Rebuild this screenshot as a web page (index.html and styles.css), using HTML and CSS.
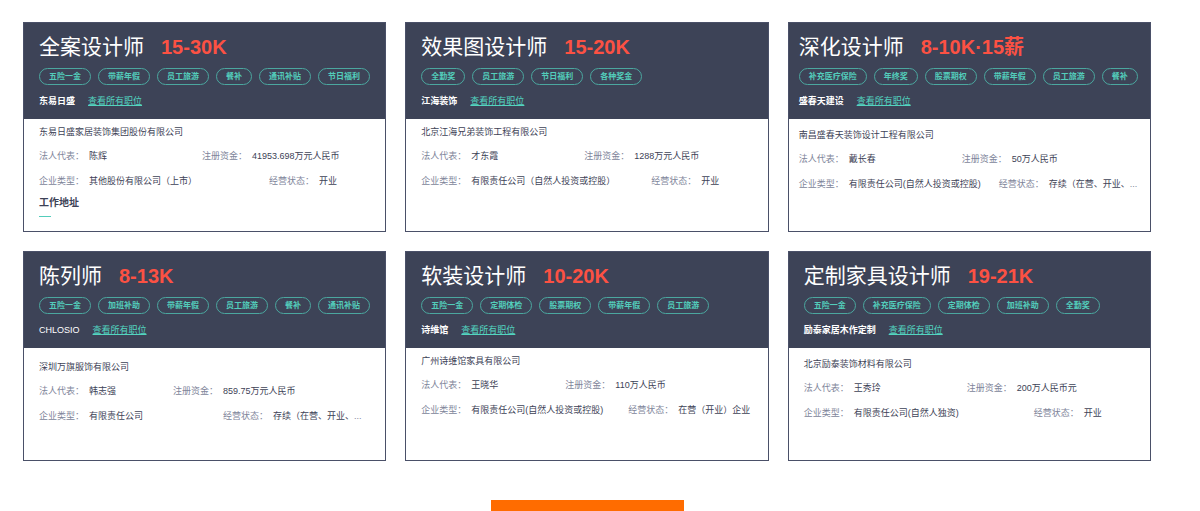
FILE: index.html
```
<!DOCTYPE html>
<html lang="zh-CN">
<head>
  <meta charset="UTF-8">
  <meta name="viewport" content="width=device-width, initial-scale=1.0">
  <title>设计师职位</title>
  <link rel="stylesheet" href="styles.css">
</head>
<body>
  <div class="container">
    <div class="cards">
      <div class="card">
        <div class="head">
          <div class="title">
            <h2>全案设计师</h2>
            <span class="salary">15-30K</span>
          </div>
          <ul class="tags">
            <li>五险一金</li>
            <li>带薪年假</li>
            <li>员工旅游</li>
            <li>餐补</li>
            <li>通讯补贴</li>
            <li>节日福利</li>
          </ul>
          <div class="company">
            <b>东易日盛</b>
            <a href="#">查看所有职位</a>
          </div>
        </div>
        <div class="info">
          <p class="name">东易日盛家居装饰集团股份有限公司</p>
          <div class="line">
            <p><span>法人代表：</span>陈辉</p>
            <p><span>注册资金：</span>41953.698万元人民币</p>
          </div>
          <div class="line type">
            <p><span>企业类型：</span>其他股份有限公司（上市）</p>
            <p><span>经营状态：</span>开业</p>
          </div>
          <h3 class="address">工作地址</h3>
        </div>
      </div>

      <div class="card">
        <div class="head">
          <div class="title">
            <h2>效果图设计师</h2>
            <span class="salary">15-20K</span>
          </div>
          <ul class="tags">
            <li>全勤奖</li>
            <li>员工旅游</li>
            <li>节日福利</li>
            <li>各种奖金</li>
          </ul>
          <div class="company">
            <b>江海装饰</b>
            <a href="#">查看所有职位</a>
          </div>
        </div>
        <div class="info">
          <p class="name">北京江海兄弟装饰工程有限公司</p>
          <div class="line">
            <p><span>法人代表：</span>才东霞</p>
            <p><span>注册资金：</span>1288万元人民币</p>
          </div>
          <div class="line type">
            <p><span>企业类型：</span>有限责任公司（自然人投资或控股）</p>
            <p><span>经营状态：</span>开业</p>
          </div>
        </div>
      </div>

      <div class="card narrow">
        <div class="head">
          <div class="title">
            <h2>深化设计师</h2>
            <span class="salary">8-10K·15薪</span>
          </div>
          <ul class="tags">
            <li>补充医疗保险</li>
            <li>年终奖</li>
            <li>股票期权</li>
            <li>带薪年假</li>
            <li>员工旅游</li>
            <li>餐补</li>
          </ul>
          <div class="company">
            <b>盛春天建设</b>
            <a href="#">查看所有职位</a>
          </div>
        </div>
        <div class="info low">
          <p class="name">南昌盛春天装饰设计工程有限公司</p>
          <div class="line">
            <p><span>法人代表：</span>戴长春</p>
            <p><span>注册资金：</span>50万人民币</p>
          </div>
          <div class="line type w200">
            <p><span>企业类型：</span>有限责任公司(自然人投资或控股)</p>
            <p><span>经营状态：</span>存续（在营、开业、<i>...</i></p>
          </div>
        </div>
      </div>

      <div class="card">
        <div class="head">
          <div class="title">
            <h2>陈列师</h2>
            <span class="salary">8-13K</span>
          </div>
          <ul class="tags">
            <li>五险一金</li>
            <li>加班补助</li>
            <li>带薪年假</li>
            <li>员工旅游</li>
            <li>餐补</li>
            <li>通讯补贴</li>
          </ul>
          <div class="company">
            <span>CHLOSIO</span>
            <a href="#">查看所有职位</a>
          </div>
        </div>
        <div class="info lower">
          <p class="name">深圳万旗服饰有限公司</p>
          <div class="line w134">
            <p><span>法人代表：</span>韩志强</p>
            <p><span>注册资金：</span>859.75万元人民币</p>
          </div>
          <div class="line type w184">
            <p><span>企业类型：</span>有限责任公司</p>
            <p><span>经营状态：</span>存续（在营、开业、<i>...</i></p>
          </div>
        </div>
      </div>

      <div class="card">
        <div class="head">
          <div class="title">
            <h2>软装设计师</h2>
            <span class="salary">10-20K</span>
          </div>
          <ul class="tags">
            <li>五险一金</li>
            <li>定期体检</li>
            <li>股票期权</li>
            <li>带薪年假</li>
            <li>员工旅游</li>
          </ul>
          <div class="company">
            <b>诗维馆</b>
            <a href="#">查看所有职位</a>
          </div>
        </div>
        <div class="info">
          <p class="name">广州诗维馆家具有限公司</p>
          <div class="line w144">
            <p><span>法人代表：</span>王晓华</p>
            <p><span>注册资金：</span>110万人民币</p>
          </div>
          <div class="line type w207">
            <p><span>企业类型：</span>有限责任公司(自然人投资或控股)</p>
            <p><span>经营状态：</span>在营（开业）企业</p>
          </div>
        </div>
      </div>

      <div class="card">
        <div class="head">
          <div class="title">
            <h2>定制家具设计师</h2>
            <span class="salary">19-21K</span>
          </div>
          <ul class="tags">
            <li>五险一金</li>
            <li>补充医疗保险</li>
            <li>定期体检</li>
            <li>加班补助</li>
            <li>全勤奖</li>
          </ul>
          <div class="company">
            <b>励泰家居木作定制</b>
            <a href="#">查看所有职位</a>
          </div>
        </div>
        <div class="info low">
          <p class="name">北京励泰装饰材料有限公司</p>
          <div class="line">
            <p><span>法人代表：</span>王秀玲</p>
            <p><span>注册资金：</span>200万人民币元</p>
          </div>
          <div class="line type">
            <p><span>企业类型：</span>有限责任公司(自然人独资)</p>
            <p><span>经营状态：</span>开业</p>
          </div>
        </div>
      </div>
    </div>
    <div class="bar"></div>
  </div>
</body>
</html>
```
FILE: styles.css
```
body {
  margin: 0px;
  background-color: #ffffff;
  font-family: "Liberation Sans", "Noto Sans CJK SC", sans-serif;
  font-size: 9px;
  line-height: 14px;
  color: #3d4256;
}
h2, h3, p, ul {
  margin: 0px;
  padding: 0px;
}
.container {
  padding: 22px 49px 0px 23px;
}
.cards {
  display: grid;
  grid-template-columns: repeat(3, 1fr);
  gap: 19px;
}
.card {
  min-height: 208px;
  border: 1px solid #4a5068;
}
.head {
  padding: 11px 0px 11px 15px;
  background-color: #3d4357;
  color: #ffffff;
}
.title {
  display: flex;
  align-items: center;
  gap: 17px;
  line-height: 26px;
}
.title h2 {
  font-size: 21px;
  font-weight: normal;
}
.salary {
  font-size: 20px;
  font-weight: bold;
  color: #fc5143;
}
.tags {
  display: flex;
  gap: 7px;
  margin-top: 8px;
  list-style: none;
}
.tags li {
  padding: 0px 9px;
  border: 1px solid #4ba79f;
  border-radius: 9px;
  font-size: 8px;
  font-weight: bold;
  line-height: 15px;
  white-space: nowrap;
  color: #53cdbb;
}
.company {
  display: flex;
  gap: 13px;
  margin-top: 9px;
}
.company a {
  color: #53d5c0;
}
.info {
  padding: 6px 0px 0px 15px;
}
.info.low {
  padding-top: 9px;
}
.info.lower {
  padding-top: 12px;
}
.narrow .head, .narrow .info {
  padding-left: 10px;
}
.line {
  display: grid;
  grid-template-columns: 163px 1fr;
  margin-top: 10px;
  white-space: nowrap;
}
.line span {
  margin-right: 5px;
  color: #80859a;
}
.line i {
  font-style: normal;
  color: #80859a;
}
.type {
  grid-template-columns: 230px 1fr;
  margin-top: 11px;
}
.w134 {
  grid-template-columns: 134px 1fr;
}
.w144 {
  grid-template-columns: 144px 1fr;
}
.w184 {
  grid-template-columns: 184px 1fr;
}
.w200 {
  grid-template-columns: 200px 1fr;
}
.w207 {
  grid-template-columns: 207px 1fr;
}
.address {
  margin-top: 8px;
  font-size: 10px;
}
.address::after {
  content: "";
  display: block;
  width: 12px;
  height: 1px;
  margin-top: 6px;
  background-color: #53cdbb;
}
.bar {
  width: 193px;
  height: 11px;
  margin: 39px auto 0px;
  background-color: #ff6c00;
}
```
